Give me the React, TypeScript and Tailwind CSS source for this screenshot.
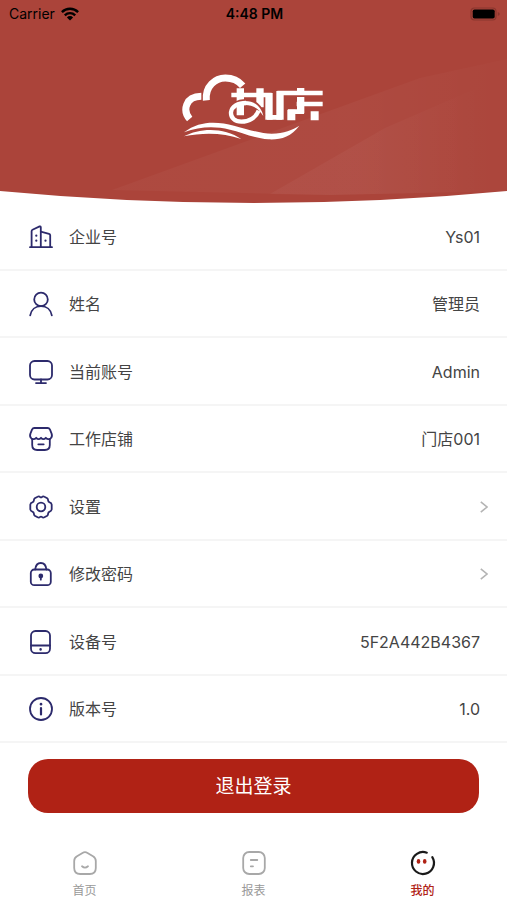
// src/pages/Mine.tsx
import { useState } from "react";
import type { ReactNode } from "react";

type Row = { label: string; icon: ReactNode; value?: string };

const icons = {
  company: (
    <>
      <path d="M1 22.2h22" />
      <path d="M2.6 22V6.2q0-1 .9-1.5L10.600 1.400q1.200-.4 1.200.9V22" />
      <path d="M11.800 6.600l8.200 2.200q1.200.3 1.200 1.500V22" />
      <path d="M7.300 10.500v.2M7.300 15.500v.2M16.500 15.500v.2" strokeWidth="2.200" />
    </>
  ),
  user: (
    <>
      <circle cx="12" cy="7.400" r="6.800" />
      <path d="M1.200 23.400C2.200 17.800 6.500 14.200 12 14.200S21.800 17.800 22.800 23.400" />
    </>
  ),
  account: (
    <>
      <rect x="1" y="1" width="22" height="18.500" rx="4.500" />
      <path d="M12 19.500V23M7 23.100h10" />
    </>
  ),
  shop: (
    <>
      <path d="M5.300 1h13.400q1.500 0 2.200 1.400l1.700 4.200q1.100 3.200-1 4.800-2.600 1.800-4.800-.6-2.400 2.700-4.800 0-2.400 2.700-4.800 0-2.200 2.400-4.800.6-2.100-1.600-1-4.800l1.700-4.200Q3.800 1 5.300 1z" />
      <path d="M3.200 12v6q0 5 5 5h7.600q5 0 5-5v-6M9.300 17.300h5.400" />
    </>
  ),
  settings: (
    <>
      <path d="M8.600 1.700Q10 .9 11 2q1 .8 2 0 1-1.100 2.400-.3l2.800 1.500q1 .8.900 2.200.1 1.500 1.600 2 1.700.5 2 2.200v4.800q-.3 1.700-2 2.200-1.500.5-1.600 2 .1 1.400-.9 2.200l-2.800 1.500q-1.400.8-2.400-.3-1-.8-2 0-1 1.100-2.400.3l-2.800-1.500q-1-.8-.9-2.200-.1-1.500-1.600-2-1.700-.5-2-2.200V9.600q.3-1.700 2-2.200 1.500-.5 1.600-2-.1-1.400.9-2.200z" />
      <circle cx="12" cy="12" r="4.300" />
    </>
  ),
  password: (
    <>
      <rect x="1.800" y="7.500" width="20" height="15.700" rx="3.500" />
      <path d="M6.200 7.500C6.600 3.500 8.700 1 11.800 1s5.200 2.500 5.600 6.500" />
      <circle cx="11.800" cy="14" r="1.500" fill="currentColor" />
      <path d="M11.800 14.500v3.200" />
    </>
  ),
  device: (
    <>
      <rect x="2" y="1" width="19" height="22.200" rx="4.500" />
      <path d="M2 15.500h19" />
      <path d="M11.600 19.300v.2" strokeWidth="2.400" />
    </>
  ),
  version: (
    <>
      <circle cx="12" cy="12" r="11" />
      <path d="M12 7v.2" strokeWidth="2.600" />
      <path d="M12 11v6.500" strokeWidth="2.200" />
    </>
  ),
};

const rows: Row[] = [
  { label: "企业号", icon: icons.company, value: "Ys01" },
  { label: "姓名", icon: icons.user, value: "管理员" },
  { label: "当前账号", icon: icons.account, value: "Admin" },
  { label: "工作店铺", icon: icons.shop, value: "门店001" },
  { label: "设置", icon: icons.settings },
  { label: "修改密码", icon: icons.password },
  { label: "设备号", icon: icons.device, value: "5F2A442B4367" },
  { label: "版本号", icon: icons.version, value: "1.0" },
];

const tabs = [
  {
    label: "首页",
    icon: (
      <>
        <path d="M9.500 1.900q2.500-1.500 5 0l5.500 3.300q2.800 1.700 2.800 4.800v7q0 6-6 6H7.200q-6 0-6-6v-7q0-3.100 2.800-4.800z" />
        <path d="M9 15.300q3 2.600 6 0" />
      </>
    ),
  },
  {
    label: "报表",
    icon: (
      <>
        <rect x="1.200" y="1" width="21.600" height="22" rx="6" />
        <path d="M8.800 9h6.500M8.800 15.300h2.200" />
      </>
    ),
  },
  {
    label: "我的",
    icon: (
      <>
        <path d="M15.800 1.700A11 11 0 1 0 21.300 6.200" strokeWidth="2.200" />
        <g className="fill-[#b02215]" stroke="none">
          <ellipse cx="7.500" cy="10.400" rx="1.800" ry="2.300" />
          <ellipse cx="13.700" cy="10.400" rx="1.800" ry="2.300" />
        </g>
      </>
    ),
  },
];

function Icon({ children }: { children: ReactNode }) {
  return (
    <svg viewBox="0 0 24 24" className="size-6 shrink-0 overflow-visible" fill="none" stroke="currentColor"
         strokeWidth="1.800" strokeLinecap="round" strokeLinejoin="round" aria-hidden="true">
      {children}
    </svg>
  );
}

function StatusBar() {
  return (
    <div className="relative grid grid-cols-3 items-center h-7 pl-[9px] pr-[7px] text-sm text-black">
      <div className="flex items-center gap-1.5">
        <span>Carrier</span>
        <svg viewBox="0 0 18 14" className="w-[18px] h-[14px]" fill="none" stroke="currentColor" strokeWidth="2.400">
          <path d="M.9 5.100a11.500 11.500 0 0 1 16.200 0M3.800 8.300a7.400 7.400 0 0 1 10.400 0" />
          <path d="M9 13.600L5.900 10.400a4.400 4.400 0 0 1 6.200 0z" fill="currentColor" stroke="none" />
        </svg>
      </div>
      <span className="text-center font-semibold">4:48 PM</span>
      <svg viewBox="0 0 30 14" className="justify-self-end w-[30px] h-[14px]">
        <rect x="1" y="1" width="25" height="12" rx="3.500" fill="none" stroke="#8a362e" strokeWidth="1.200" />
        <rect x="2.700" y="2.500" width="22" height="9" rx="1.800" />
        <path d="M27.800 5v4q2-.8 2-2t-2-2z" fill="#8a362e" />
      </svg>
    </div>
  );
}

function Logo() {
  return (
    <svg viewBox="546 219 429 201" className="w-[143px] h-[67px]" fill="none" stroke="#fff" role="img" aria-label="logo">
      {/* cloud */}
      <path d="M569 357C548 333 555 289 604 289" strokeWidth="21" />
      <path d="M619 301C615 259 646 234 676 234C699 234 716 243 728 257" strokeWidth="21" />
      {/* lettering */}
      <path d="M694 285H808V352H839V279H968" strokeWidth="14" />
      <path d="M721 265V346M780 265V322" strokeWidth="22" />
      <path d="M807 279V359M840 273V359M902 264V280M902 291V340" strokeWidth="22" />
      <path d="M890 312H968M864 335H912" strokeWidth="14" />
      <path d="M874 329V361M944 334V361" strokeWidth="24" />
      {/* ring crossing the first letter */}
      <path d="M693 338C693 314 716 303 742 305C764 307 780 321 789 348" stroke="#ab443a" strokeWidth="15" />
      <path d="M776 332C768 352 748 365 724 365C704 365 692 353 693 337C695 319 714 309 738 309" strokeWidth="13" />
      <path d="M732 303C764 302 784 320 790 348C776 325 758 314 732 315Z" fill="#fff" stroke="none" />
      {/* waves */}
      <g fill="#fff" stroke="none">
        <path d="M552 397C600 360 654 365 702 377C752 391 785 401 815 401C852 400 878 390 898 377C873 411 840 420 805 418C760 415 724 396 690 389C640 377 600 380 552 397Z" />
        <path d="M552 409C600 382 674 382 724 417C670 398 610 397 552 409Z" />
      </g>
    </svg>
  );
}

function Header() {
  return (
    <header className="relative h-[203px]">
      <svg viewBox="0 0 507 203" preserveAspectRatio="none" className="absolute inset-0 size-full" aria-hidden="true">
        <defs>
          <linearGradient id="wide" x1="0" y1="0" x2="1" y2="0">
            <stop offset="0" stopColor="#fff" stopOpacity="0.030" />
            <stop offset="0.600" stopColor="#fff" stopOpacity="0.035" />
            <stop offset="1" stopColor="#fff" stopOpacity="0.010" />
          </linearGradient>
          <linearGradient id="beam" x1="0" y1="0" x2="1" y2="0">
            <stop offset="0" stopColor="#fff" stopOpacity="0.035" />
            <stop offset="0.400" stopColor="#fff" stopOpacity="0.035" />
            <stop offset="0.900" stopColor="#fff" stopOpacity="0" />
          </linearGradient>
        </defs>
        <path d="M0 0H507V191Q253.500 215 0 191Z" fill="#ab443a" />
        <path d="M112 190L420 78L507 59V191L330 195Z" fill="url(#wide)" />
        <path d="M270 194L385 128L507 75V191L330 195Z" fill="url(#beam)" />
      </svg>
      <StatusBar />
      <div className="relative flex justify-center pt-[45px]">
        <Logo />
      </div>
    </header>
  );
}

export default function MinePage() {
  const [tab, setTab] = useState("我的");

  return (
    <div className="min-h-screen flex flex-col bg-white font-['Inter','Noto_Sans_CJK_SC',sans-serif]">
      <Header />
      <ul className="grid auto-rows-fr h-[540px] text-base text-[#444]">
        {rows.map((r) => (
          <li key={r.label} className="border-b-2 border-[#f5f5f5]">
            {r.value ? (
              <div className="flex items-center gap-4 h-full pt-0.5 pl-[29px] pr-[27px]">
                <span className="text-[#2c2a6c]"><Icon>{r.icon}</Icon></span>
                <span className="flex-1">{r.label}</span>
                <span>{r.value}</span>
              </div>
            ) : (
              <button type="button" className="flex items-center gap-4 w-full h-full pt-0.5 pl-[29px] pr-[19px] text-left">
                <span className="text-[#2c2a6c]"><Icon>{r.icon}</Icon></span>
                <span className="flex-1">{r.label}</span>
                <svg viewBox="0 0 8 12" className="w-2 h-3" fill="none" stroke="#b4b4b4" strokeWidth="1.600">
                  <path d="M.8.8L7 6L.8 11.200" />
                </svg>
              </button>
            )}
          </li>
        ))}
      </ul>

      <div className="px-7 pt-4">
        <button type="button" className="w-full h-[54px] pt-0.5 rounded-[20px] bg-[#b02215] text-white text-[19px]">
          退出登录
        </button>
      </div>

      <nav className="mt-auto grid grid-cols-3 text-xs">
        {tabs.map((t) => (
          <button key={t.label} type="button" onClick={() => setTab(t.label)}
                  className="flex flex-col items-center gap-2 h-[49px]">
            <span className={t.label === tab ? "text-[#1a1a1a]" : "text-[#a8a8a8]"}><Icon>{t.icon}</Icon></span>
            <span className={t.label === tab ? "font-medium text-[#b02215]" : "text-[#999]"}>{t.label}</span>
          </button>
        ))}
      </nav>
    </div>
  );
}
